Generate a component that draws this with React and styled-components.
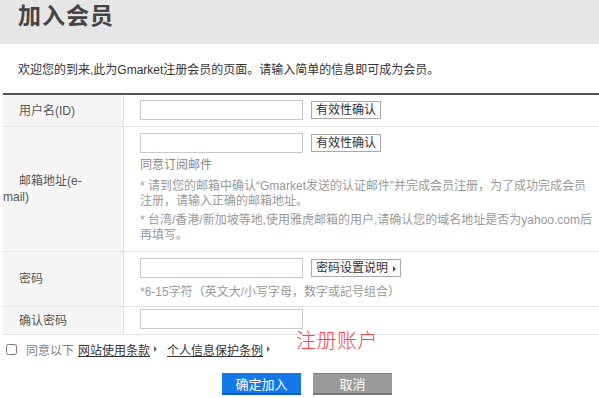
import React from "react";
import styled, { createGlobalStyle } from "styled-components";

const GlobalStyle = createGlobalStyle`
  html, body {
    margin: 0;
    padding: 0;
    background: #fff;
  }
  body {
    font-family: "Liberation Sans", Arial, "Noto Sans CJK SC", sans-serif;
    font-size: 12px;
    color: #333;
  }
`;

const Page = styled.div`
  width: 599px;
  overflow: hidden;
`;

const Header = styled.header`
  height: 44px;
  background: #e6e6e6;
  padding-left: 18px;
  display: flex;
  align-items: center;

  h1 {
    margin: 0;
    font-size: 23px;
    font-weight: 700;
    color: #444;
    letter-spacing: 1px;
    line-height: 1;
    margin-top: -12px;
  }
`;

const Intro = styled.p`
  margin: 0;
  padding: 19px 0 0 18px;
  height: 30px;
  line-height: 14px;
  color: #333;
`;

const FormTable = styled.table`
  margin-left: 3px;
  width: 610px;
  border-collapse: collapse;
  border-top: 2px solid #555;
  border-bottom: 1px solid #e3e3e3;
`;

const Row = styled.tr`
  border-top: 1px solid #e3e3e3;
  &:first-child {
    border-top: none;
  }
`;

const Label = styled.th`
  width: 96px;
  padding: 0 24px 0 0;
  text-indent: 16px;
  text-align: left;
  font-weight: 400;
  color: #555;
  background: #f5f5f5;
  border-right: 1px solid #e3e3e3;
  vertical-align: middle;
  line-height: 16px;
  height: ${(p) => p.$h}px;
`;

const Cell = styled.td`
  padding: ${(p) => p.$pt || 5}px 0 ${(p) => p.$pb || 4}px 16px;
  vertical-align: top;
`;

const Field = styled.div`
  display: flex;
  align-items: center;
  gap: 8px;
`;

const Input = styled.input`
  width: 163px;
  height: 20px;
  box-sizing: border-box;
  border: 1px solid #c8c8c8;
  padding: 0 4px;
  margin: 0;
  font: inherit;
`;

const SmallButton = styled.button`
  height: 18px;
  box-sizing: border-box;
  padding: 0 ${(p) => (p.$arrow ? 12 : 4)}px 0 4px;
  border: 1px solid #aaa;
  background: #fbfbfb;
  color: #333;
  font: inherit;
  font-size: 12px;
  line-height: 16px;
  position: relative;
  cursor: pointer;

  ${(p) =>
    p.$arrow &&
    `
    &::after {
      content: "";
      position: absolute;
      right: 4px;
      top: 6px;
      border-left: 3px solid #555;
      border-top: 3px solid transparent;
      border-bottom: 3px solid transparent;
    }
  `}
`;

const Subscribe = styled.div`
  margin-top: 4px;
  color: #888;
  line-height: 16px;
`;

const Note = styled.p`
  margin: ${(p) => p.$mt || 0}px 0 0;
  color: #999;
  line-height: 15px;
  width: 455px;
`;

const Hint = styled.div`
  margin-top: 6px;
  color: #999;
  line-height: 16px;
`;

const AgreeRow = styled.div`
  position: relative;
  display: flex;
  align-items: center;
  height: 28px;
  padding-left: 6px;
  color: #808080;
`;

const Check = styled.input`
  width: 11px;
  height: 11px;
  margin: 0 9px 0 0;
`;

const TermLink = styled.a`
  color: #333;
  text-decoration: underline;
  margin-left: ${(p) => p.$ml || 0}px;
  position: relative;
  padding-right: 7px;

  &::after {
    content: "";
    position: absolute;
    right: 0;
    top: 5px;
    border-left: 3px solid #666;
    border-top: 3px solid transparent;
    border-bottom: 3px solid transparent;
  }
`;

const RegisterNote = styled.span`
  position: absolute;
  left: 296px;
  top: -10px;
  font-family: "Noto Sans CJK SC", sans-serif;
  font-weight: 300;
  font-size: 20px;
  color: #f44;
  letter-spacing: 0.5px;
`;

const Actions = styled.div`
  display: flex;
  gap: 12px;
  padding: 10px 0 0 222px;
`;

const ActionButton = styled.button`
  width: 79px;
  height: 22px;
  box-sizing: border-box;
  font-family: "Noto Sans CJK SC", sans-serif;
  font-size: 13px;
  color: #fff;
  border: none;
  cursor: pointer;
  padding: 0;
  line-height: 19px;
  background: ${(p) => (p.$primary ? "#1677e8" : "#9a9a9a")};
  border-bottom: 2px solid ${(p) => (p.$primary ? "#0f5cbd" : "#7a7a7a")};
  border-top: 1px solid ${(p) => (p.$primary ? "#1677e8" : "#7f7f7f")};
`;

export default function App() {
  return (
    <Page>
      <GlobalStyle />
      <Header>
        <h1>加入会员</h1>
      </Header>
      <Intro>欢迎您的到来,此为Gmarket注册会员的页面。请输入简单的信息即可成为会员。</Intro>
      <FormTable>
        <tbody>
          <Row>
            <Label $h={31}>用户名(ID)</Label>
            <Cell $pt={5} $pb={5}>
              <Field>
                <Input type="text" />
                <SmallButton>有效性确认</SmallButton>
              </Field>
            </Cell>
          </Row>
          <Row>
            <Label $h={123}>邮箱地址(e-mail)</Label>
            <Cell $pt={6} $pb={8}>
              <Field>
                <Input type="text" />
                <SmallButton>有效性确认</SmallButton>
              </Field>
              <Subscribe>同意订阅邮件</Subscribe>
              <Note $mt={6}>
                * 请到您的邮箱中确认“Gmarket发送的认证邮件”并完成会员注册，为了成功完成会员注册，请输入正确的邮箱地址。
              </Note>
              <Note $mt={4}>
                * 台湾/香港/新加坡等地,使用雅虎邮箱的用户,请确认您的域名地址是否为yahoo.com后再填写。
              </Note>
            </Cell>
          </Row>
          <Row>
            <Label $h={54}>密码</Label>
            <Cell $pt={6} $pb={5}>
              <Field>
                <Input type="password" />
                <SmallButton $arrow>密码设置说明</SmallButton>
              </Field>
              <Hint>*6-15字符（英文大/小写字母，数字或記号组合）</Hint>
            </Cell>
          </Row>
          <Row>
            <Label $h={27}>确认密码</Label>
            <Cell $pt={2} $pb={5}>
              <Field>
                <Input type="password" />
              </Field>
            </Cell>
          </Row>
        </tbody>
      </FormTable>
      <AgreeRow>
        <Check type="checkbox" />
        同意以下
        <TermLink $ml={4}>网站使用条款</TermLink>
        <TermLink $ml={10}>个人信息保护条例</TermLink>
        <RegisterNote>注册账户</RegisterNote>
      </AgreeRow>
      <Actions>
        <ActionButton $primary>确定加入</ActionButton>
        <ActionButton>取消</ActionButton>
      </Actions>
    </Page>
  );
}
